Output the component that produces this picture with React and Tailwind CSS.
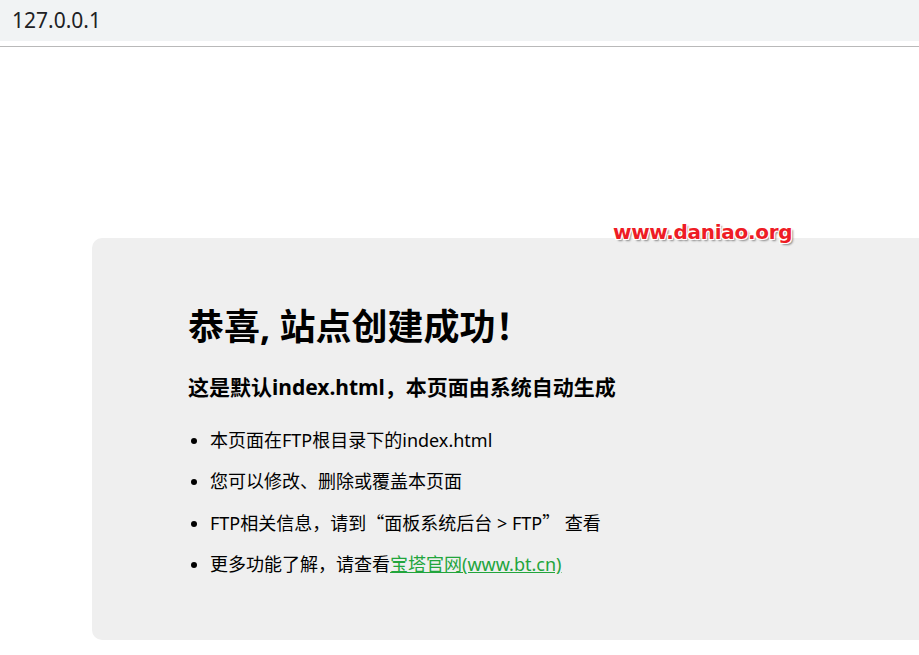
import React from "react";

export default function App() {
  return (
    <div
      lang="zh-CN"
      className="relative w-[919px] h-[655px] overflow-hidden bg-white"
      style={{ fontFamily: '"Noto Sans", "Noto Sans CJK SC", sans-serif' }}
    >
      {/* address bar */}
      <div className="h-[41px] bg-[#f1f3f4] flex items-center pl-[12px] text-[21px] text-[#202124]">
        127.0.0.1
      </div>
      <div className="h-[5px]" />
      <div className="h-[1px] bg-[#b9b9b9]" />

      {/* page */}
      <div className="pt-[191px] pl-[92px]">
        <div className="h-[402px] bg-[#efefef] rounded-l-[10px] pl-[96px] pt-[65px] text-black">
          <h1 className="text-[36px] font-bold leading-[48px]">
            恭喜, 站点创建成功！
          </h1>
          <h3 className="mt-[22px] text-[21px] font-bold leading-[28px]">
            这是默认index.html，本页面由系统自动生成
          </h3>
          <ul className="mt-[27px] list-disc pl-[22px] text-[18px] leading-[24px]">
            <li className="mb-[17px]">本页面在FTP根目录下的index.html</li>
            <li className="mb-[17px]">您可以修改、删除或覆盖本页面</li>
            <li className="mb-[17px]">
              FTP相关信息，请到
              <span className="font-['Noto_Sans_CJK_SC'] [font-feature-settings:'fwid']">“</span>
              面板系统后台 &gt; FTP
              <span className="font-['Noto_Sans_CJK_SC'] [font-feature-settings:'fwid']">”</span>
              {" "}查看
            </li>
            <li>
              更多功能了解，请查看
              <a href="#" className="text-[#22a53c] underline">
                宝塔官网(www.bt.cn)
              </a>
            </li>
          </ul>
        </div>
      </div>

      {/* watermark */}
      <div
        className="absolute left-[613px] top-[217px] text-[20px] font-bold text-[#ee1c25] tracking-[-0.3px]"
        style={{
          fontFamily: '"DejaVu Sans", sans-serif',
          textShadow:
            "1px 1px 0 #fff, -1px -1px 0 #fff, 1px -1px 0 #fff, -1px 1px 0 #fff, 2px 2px 2px #888",
        }}
      >
        www.daniao.org
      </div>
    </div>
  );
}
